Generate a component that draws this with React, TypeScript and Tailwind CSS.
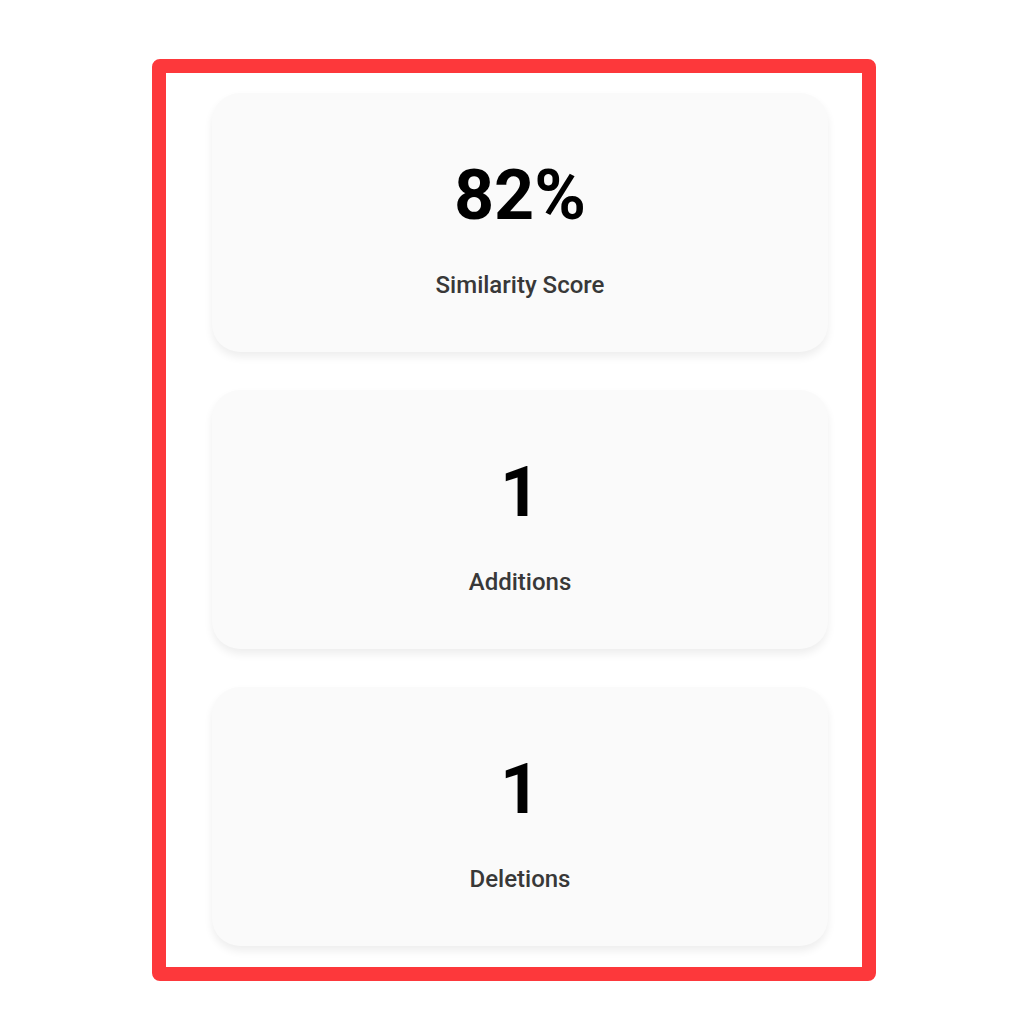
import React from "react";

const stats = [
  { value: "82%", label: "Similarity Score" },
  { value: "1", label: "Additions" },
  { value: "1", label: "Deletions" },
];

export default function App() {
  return (
    <div className="min-h-[1024px] w-[1024px] bg-white pt-[59px] pl-[152px]" style={{ fontFamily: "Roboto, 'Noto Sans', sans-serif" }}>
      <div className="w-[724px] h-[922px] border-[14px] border-[#fd383b] rounded-[8px] pl-[46px] pr-[34px] pt-[20px] flex flex-col gap-[38px]">
        {stats.map((s, i) => (
          <div
            key={i}
            className="h-[259px] rounded-[28px] bg-[#fafafa] shadow-[0_5px_8px_rgba(0,0,0,0.07)] flex flex-col items-center"
          >
            <div className="pt-[67px] text-[70px] leading-[70px] font-bold text-black">{s.value}</div>
            <div className="mt-[43px] text-[24px] leading-[24px] font-medium text-[#383838]">{s.label}</div>
          </div>
        ))}
      </div>
    </div>
  );
}
